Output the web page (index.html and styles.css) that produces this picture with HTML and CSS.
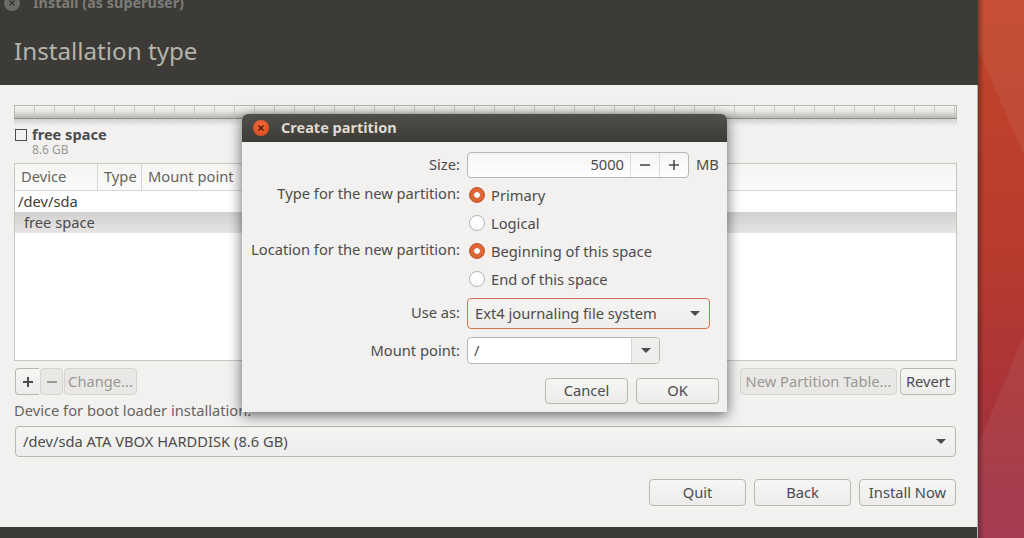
FILE: index.html
```html
<!DOCTYPE html>
<html lang="en">
<head>
  <meta charset="UTF-8" />
  <title>Install (as superuser)</title>
  <link rel="stylesheet" href="styles.css">
</head>
<body>
  <div class="window">
    <header class="header">
      <div class="titlebar">
        <span class="wm-close"><svg width="16" height="16" viewBox="0 0 16 16"><path d="M5.5 5.5l5 5M10.5 5.5l-5 5" stroke="#33322e" stroke-width="1.2"/></svg></span>
        <span class="wm-title">Install (as superuser)</span>
      </div>
      <h1>Installation type</h1>
    </header>
    <main class="content">
      <div class="diskbar"></div>
      <div class="legend">
        <span class="swatch"></span>
        <div>
          <div class="legend-name">free space</div>
          <div class="legend-size">8.6 GB</div>
        </div>
      </div>
      <div class="tree">
        <div class="tree-head">
          <span class="col col-device">Device</span>
          <span class="col col-type">Type</span>
          <span class="col col-mount">Mount point</span>
          <span class="col col-rest"></span>
        </div>
        <div class="tree-row">/dev/sda</div>
        <div class="tree-row tree-sel">free space</div>
      </div>
      <div class="toolbar">
        <button class="btn btn-icon btn-plus"><svg width="12" height="12" viewBox="0 0 12 12"><path d="M1 6h10M6 1v10" stroke="#4c4c4c" stroke-width="2"/></svg></button>
        <button class="btn btn-icon btn-off"><svg width="12" height="12" viewBox="0 0 12 12"><path d="M1 6h10" stroke="#9a9a96" stroke-width="2"/></svg></button>
        <button class="btn btn-off btn-change">Change...</button>
        <span class="spacer"></span>
        <button class="btn btn-off btn-table">New Partition Table...</button>
        <button class="btn btn-revert">Revert</button>
      </div>
      <div class="boot-label">Device for boot loader installation:</div>
      <div class="combo boot-combo">
        <span>/dev/sda ATA VBOX HARDDISK (8.6 GB)</span>
        <i class="arrow"></i>
      </div>
      <div class="actions">
        <button class="btn btn-action">Quit</button>
        <button class="btn btn-action">Back</button>
        <button class="btn btn-action">Install Now</button>
      </div>
    </main>
    <footer class="footer"></footer>
  </div>
  <div class="wallpaper">
    <svg width="46" height="538" viewBox="0 0 46 538">
      <path d="M0 0H46V155L0 50Z" fill="#fff" fill-opacity=".06"/>
      <path d="M0 445L46 335V538H0Z" fill="#fff" fill-opacity=".06"/>
    </svg>
  </div>

  <section class="dialog">
    <div class="dialog-title">
      <span class="dialog-close"><svg width="16" height="16" viewBox="0 0 16 16"><path d="M5.5 5.5l5 5M10.5 5.5l-5 5" stroke="#3a1a0c" stroke-width="1.2"/></svg></span>
      <span class="dialog-name">Create partition</span>
    </div>
    <div class="form">
      <label class="lbl lbl-size">Size:</label>
      <div class="size-row">
        <div class="spin">
          <span class="spin-value">5000</span>
          <span class="spin-btn"><svg width="12" height="12" viewBox="0 0 12 12"><path d="M1 6h10" stroke="#4c4c4c" stroke-width="1.6"/></svg></span>
          <span class="spin-btn"><svg width="12" height="12" viewBox="0 0 12 12"><path d="M1 6h10M6 1v10" stroke="#4c4c4c" stroke-width="1.6"/></svg></span>
        </div>
        <span class="unit">MB</span>
      </div>

      <label class="lbl lbl-radio">Type for the new partition:</label>
      <div class="radio-row"><i class="radio radio-on"></i>Primary</div>
      <span></span>
      <div class="radio-row"><i class="radio"></i>Logical</div>
      <label class="lbl lbl-radio">Location for the new partition:</label>
      <div class="radio-row"><i class="radio radio-on"></i>Beginning of this space</div>
      <span></span>
      <div class="radio-row"><i class="radio"></i>End of this space</div>

      <label class="lbl lbl-use">Use as:</label>
      <div class="combo use-combo">
        <span>Ext4 journaling file system</span>
        <i class="arrow"></i>
      </div>
      <label class="lbl lbl-mount">Mount point:</label>
      <div class="mount-entry">
        <span class="mount-value">/</span>
        <span class="mount-btn"><i class="arrow"></i></span>
      </div>
    </div>
    <div class="dialog-actions">
      <button class="btn btn-dialog">Cancel</button>
      <button class="btn btn-dialog">OK</button>
    </div>
  </section>
</body>
</html>
```

FILE: styles.css
```css
* {
  box-sizing: border-box;
}
html, body {
  height: 100%;
}
body {
  margin: 0;
  display: flex;
  overflow: hidden;
  position: relative;
  font-family: "Noto Sans", sans-serif;
  font-size: 14.7px;
  color: #4c4c4c;
  background: #b23a33;
}

/* main installer window */
.window {
  width: 978px;
  height: 538px;
  flex: none;
  display: flex;
  flex-direction: column;
  border-right: 1px solid #b4b2ae;
  background: #f2f1f0;
}
.header {
  height: 85px;
  margin-right: -1px;
  background: #3c3b37;
  overflow: hidden;
}
.titlebar {
  display: flex;
  align-items: center;
  height: 16px;
  margin-top: -5px;
  padding-left: 4px;
}
.wm-close {
  width: 16px;
  height: 16px;
  border-radius: 50%;
  background: #6d6c67;
}
.wm-close svg {
  display: block;
}
.wm-title {
  margin-left: 13px;
  margin-top: -2px;
  font-weight: 700;
  font-size: 14.4px;
  color: #7d7c76;
}
.header h1 {
  margin: 24px 0 0 14px;
  font-weight: 400;
  font-size: 24.2px;
  line-height: 32px;
  color: #b5b3aa;
}
.content {
  flex: 1;
  padding: 20px 20px 0 14px;
  display: flex;
  flex-direction: column;
}
.diskbar {
  height: 14px;
  flex: none;
  border: 1px solid #b9b7b3;
  border-bottom-color: #8d8b87;
  background:
    repeating-linear-gradient(90deg, transparent 0 19px, #c9c8c5 19px 20px),
    linear-gradient(#f4f4f3 0, #e6e6e5 45%, #b5b4b2 100%);
  position: relative;
}
.diskbar::after {
  content: "";
  position: absolute;
  left: -1px;
  right: -1px;
  top: 13px;
  height: 7px;
  background:
    repeating-linear-gradient(90deg, transparent 0 19px, #e4e3e1 19px 20px),
    linear-gradient(#d0cfcd, #f2f1f0);
}
.legend {
  display: flex;
  gap: 5px;
  margin-top: 8px;
  height: 36px;
}
.swatch {
  width: 12px;
  height: 12px;
  margin: 2px 0 0 1px;
  border: 1px solid #4c4c4c;
  background: #f2f1f0;
}
.legend-name {
  margin: -1px 0 1px;
  font-weight: 700;
  font-size: 14.6px;
  line-height: 16px;
}
.legend-size {
  font-size: 12px;
  line-height: 14px;
  color: #9a9995;
}
.tree {
  height: 198px;
  flex: none;
  border: 1px solid #c8c6c2;
  background: #fff;
}
.tree-head {
  display: flex;
  height: 27px;
  border-bottom: 1px solid #d8d6d3;
  background: linear-gradient(#f4f4f3, #fbfbfb);
}
.col {
  padding-left: 6px;
  line-height: 24px;
  color: #65655f;
  border-right: 1px solid #d8d6d3;
}
.col-device {
  width: 83px;
}
.col-type {
  width: 44px;
}
.col-mount {
  width: 160px;
}
.col-rest {
  flex: 1;
  border-right: 0;
}
.tree-row {
  height: 21px;
  padding-left: 3px;
  line-height: 21px;
  color: #3c3c3c;
}
.tree-sel {
  padding-left: 9px;
  background: linear-gradient(#d2d1cf, #e6e5e3);
  color: #4c4c4c;
}

/* buttons */
.btn {
  height: 27px;
  padding: 0 0 2px;
  border: 1px solid #b9b7b3;
  border-radius: 4px;
  background: linear-gradient(#f6f6f5, #edecea);
  font: inherit;
  color: #4c4c4c;
}
.btn-off {
  border-color: #d6d4d1;
  background: #e9e8e6;
  color: #9a9994;
}
.btn-icon {
  padding: 0;
}
.btn-icon svg {
  display: block;
  margin: auto;
}
.toolbar {
  display: flex;
  margin-top: 7px;
  padding: 0 1px;
}
.btn-plus {
  width: 24px;
  border-radius: 4px 0 0 4px;
  border-right: 0;
}
.btn-icon.btn-off {
  width: 23px;
  margin-left: 1px;
}
.btn-change {
  width: 73px;
  margin-left: 1px;
}
.spacer {
  flex: 1;
}
.btn-table {
  width: 157px;
}
.btn-revert {
  width: 56px;
  margin-left: 3px;
}
.boot-label {
  margin-top: 6px;
  line-height: 18px;
  color: #65655f;
}
.combo {
  display: flex;
  align-items: center;
  justify-content: space-between;
  border: 1px solid #b9b7b3;
  border-radius: 4px;
  background: linear-gradient(#f4f4f3, #efeeec);
}
.boot-combo {
  height: 31px;
  margin: 7px 1px 0;
  padding: 0 9px 2px 7px;
}
.arrow {
  width: 0;
  height: 0;
  border-left: 5px solid transparent;
  border-right: 5px solid transparent;
  border-top: 5px solid #4c4c4c;
}
.actions {
  display: flex;
  justify-content: flex-end;
  gap: 8px;
  margin-top: 22px;
  padding-right: 1px;
}
.btn-action {
  width: 97px;
}
.footer {
  height: 11px;
  background: #3c3b37;
}
.wallpaper {
  flex: 1;
  position: relative;
  background: linear-gradient(#c2452a 0, #b63b2f 50%, #a83339 75%, #9e3048 100%);
}
.wallpaper svg {
  display: block;
}
.wallpaper::after {
  content: "";
  position: absolute;
  left: 0;
  top: 0;
  bottom: 0;
  width: 6px;
  background: linear-gradient(90deg, rgba(0,0,0,.3), rgba(0,0,0,0));
}

/* dialog over the window */
.dialog {
  position: absolute;
  left: 242px;
  top: 114px;
  width: 485px;
  height: 298px;
  display: flex;
  flex-direction: column;
  border-radius: 6px 6px 0 0;
  background: #f2f1f0;
  box-shadow: 0 3px 14px rgba(0,0,0,.6);
}
.dialog-title {
  display: flex;
  align-items: center;
  gap: 12px;
  height: 28px;
  padding-left: 11px;
  border-radius: 6px 6px 0 0;
  background: linear-gradient(#504f4a, #3c3b37);
  font-weight: 700;
  font-size: 14.5px;
  color: #dfdbd2;
}
.dialog-name {
  margin-top: -2px;
}
.dialog-close {
  width: 16px;
  height: 16px;
  border-radius: 50%;
  background: radial-gradient(circle at 50% 30%, #f0673a, #d8481d);
}
.dialog-close svg {
  display: block;
}
.form {
  display: grid;
  grid-template-columns: 218px 1fr;
  column-gap: 7px;
  padding-top: 10px;
}
.lbl {
  text-align: right;
  color: #4c4c4c;
}
.lbl-size {
  line-height: 24px;
}
.lbl-radio {
  margin-top: 1px;
  line-height: 22px;
}
.lbl-use {
  margin-top: 5px;
  line-height: 29px;
}
.lbl-mount {
  margin-top: 8px;
  line-height: 27px;
}
.size-row {
  display: flex;
  align-items: center;
  height: 26px;
  margin-bottom: 3px;
}
.spin {
  display: flex;
  width: 222px;
  height: 26px;
  border: 1px solid #b9b7b3;
  border-radius: 4px;
  background: linear-gradient(#f4f4f4, #fff);
}
.spin-value {
  flex: 1;
  padding-right: 6px;
  text-align: right;
  line-height: 22px;
}
.spin-btn {
  width: 29px;
  display: flex;
  align-items: center;
  justify-content: center;
  border-left: 1px solid #dedcd9;
}
.unit {
  margin: -2px 0 0 7px;
}
.radio-row {
  display: flex;
  align-items: center;
  height: 28px;
  padding-left: 2px;
}
.radio {
  width: 16px;
  height: 16px;
  margin-right: 6px;
  border: 1px solid #b4b2ae;
  border-radius: 50%;
  background: #fff;
}
.radio-on {
  border-color: #c4552a;
  background: radial-gradient(circle, #fff 0 2.5px, #e0693a 3.2px, #d85c2c 100%);
}
.use-combo {
  width: 243px;
  height: 31px;
  margin-top: 5px;
  padding: 0 9px 2px 7px;
  border-color: #d4744f;
}
.use-combo .arrow {
  margin-top: 2px;
}
.boot-combo .arrow {
  margin-top: 2px;
}
.mount-entry {
  display: flex;
  width: 193px;
  height: 27px;
  margin-top: 8px;
  border: 1px solid #b9b7b3;
  border-radius: 4px;
  background: #fff;
}
.mount-value {
  flex: 1;
  padding-left: 6px;
  line-height: 25px;
}
.mount-btn {
  width: 28px;
  display: flex;
  align-items: center;
  justify-content: center;
  border-left: 1px solid #d8d6d3;
  border-radius: 0 3px 3px 0;
  background: #efeeec;
}
.dialog-actions {
  display: flex;
  justify-content: flex-end;
  gap: 8px;
  margin-top: 14px;
  padding-right: 8px;
}
.btn-dialog {
  width: 83px;
  height: 26px;
}
```
